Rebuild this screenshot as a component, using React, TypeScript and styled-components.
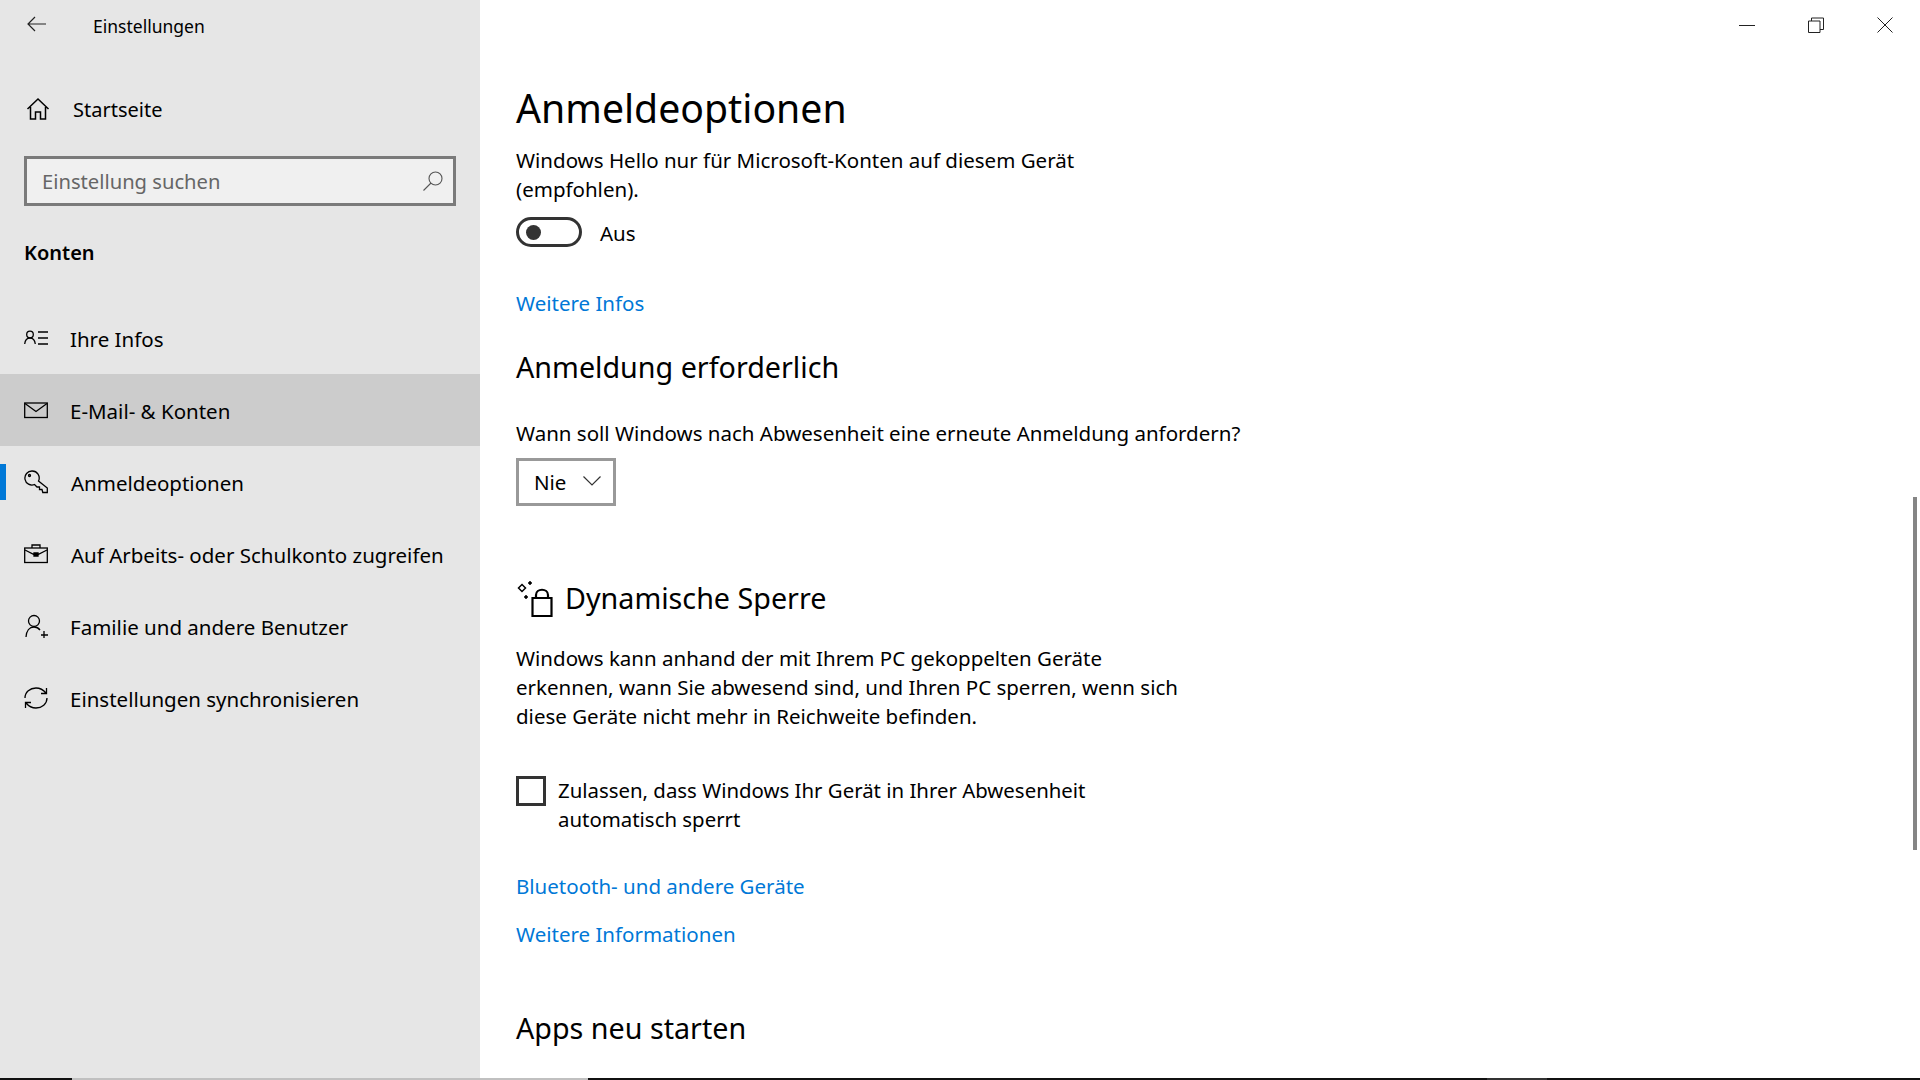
import React from "react";
import styled, { createGlobalStyle } from "styled-components";

const Global = createGlobalStyle`
  html, body { margin: 0; padding: 0; background: #fff; }
  body { font-family: "Noto Sans", "Open Sans", sans-serif; color: #000; }
`;

const Screen = styled.div`
  width: 1920px;
  height: 1080px;
  display: flex;
  flex-direction: column;
  overflow: hidden;
`;
const Main = styled.div`
  flex: 1;
  min-height: 0;
  display: flex;
`;
const TaskStrip = styled.div`
  height: 2px;
  flex: none;
  display: grid;
  grid-template-columns: 72px 516px 899px 60px 1fr;
`;
const StripPart = styled.div<{ $c: string }>`
  background: ${(p) => p.$c};
`;
const Sidebar = styled.nav`
  width: 480px;
  flex: none;
  background: #e6e6e6;
  display: flex;
  flex-direction: column;
`;
const TitleRow = styled.div`
  height: 50px;
  display: flex;
  align-items: center;
  padding-left: 27px;
`;
const BackArrow = styled.svg`
  width: 19px;
  height: 16px;
  margin-bottom: 3px;
  fill: none;
  stroke: #222;
  stroke-width: 1.2;
`;
const AppTitle = styled.span`
  font-size: 17.5px;
  margin: 2px 0 0 47px;
`;
const HomeRow = styled.div`
  height: 60px;
  margin-top: 29px;
  display: flex;
  align-items: center;
  padding-left: 26px;
  font-size: 20px;
`;
const HomeLabel = styled.span`
  margin-left: 23px;
`;
const Search = styled.div`
  margin: 17px 24px 0;
  height: 50px;
  box-sizing: border-box;
  border: 3px solid #7a7a7a;
  background: #f0f0f0;
  display: flex;
  align-items: center;
  justify-content: space-between;
  padding: 0 10px 0 15px;
  font-size: 20.2px;
  color: #666;
`;
const GroupTitle = styled.div`
  margin: 31px 0 0 24px;
  height: 32px;
  line-height: 32px;
  font-size: 20px;
  font-weight: 600;
`;
const NavList = styled.div`
  margin-top: 33px;
  display: flex;
  flex-direction: column;
`;
const NavItem = styled.div<{ $hover?: boolean; $selected?: boolean }>`
  position: relative;
  height: 72px;
  display: flex;
  align-items: center;
  padding-left: 24px;
  font-size: 20.5px;
  background: ${(p) => (p.$hover ? "#ccc" : "transparent")};
  ${(p) =>
    p.$selected
      ? `&::before { content: ""; position: absolute; left: 0; top: 18px; width: 6px; height: 36px; background: #0078d7; }`
      : ""}
`;
const NavIcon = styled.svg`
  width: 24px;
  height: 24px;
  flex: none;
  fill: none;
  stroke: #000;
  stroke-width: 1.3;
`;
const NavLabel = styled.span<{ $shift?: number }>`
  margin: 2px 0 0 ${(p) => 22 + (p.$shift ?? 0)}px;
`;

const Content = styled.main`
  flex: 1;
  position: relative;
  padding: 0 0 0 36px;
  overflow: hidden;
`;
const WindowButtons = styled.div`
  position: absolute;
  right: 1px;
  top: 0;
  display: flex;
`;
const WinBtn = styled.div`
  width: 69px;
  height: 50px;
  display: flex;
  align-items: center;
  justify-content: center;
`;
const Scrollbar = styled.div`
  position: absolute;
  right: 3px;
  top: 497px;
  width: 4px;
  height: 353px;
  background: #858585;
`;
const PageTitle = styled.h1`
  margin: 0;
  padding-top: 80px;
  font-size: 39.2px;
  line-height: 56px;
  font-weight: 400;
`;
const Para = styled.p<{ $top?: number }>`
  margin: ${(p) => p.$top ?? 0}px 0 0;
  font-size: 20.5px;
  line-height: 29px;
`;
const ToggleRow = styled.div`
  margin-top: 13px;
  display: flex;
  align-items: center;
  height: 30px;
  font-size: 20.5px;
`;
const Toggle = styled.div`
  width: 66px;
  height: 30px;
  box-sizing: border-box;
  border: 3px solid #333;
  border-radius: 15px;
  display: flex;
  align-items: center;
  padding-left: 7px;
  margin-right: 18px;
`;
const ToggleLabel = styled.span`
  margin-top: 2px;
`;
const Knob = styled.div`
  width: 15px;
  height: 15px;
  border-radius: 50%;
  background: #333;
`;
const LinkText = styled.div<{ $top: number }>`
  margin-top: ${(p) => p.$top}px;
  font-size: 20.5px;
  line-height: 29px;
  color: #0078d7;
`;
const SectionTitle = styled.h2<{ $top: number }>`
  margin: ${(p) => p.$top}px 0 0;
  font-size: 28.7px;
  line-height: 40px;
  font-weight: 400;
`;
const Select = styled.div`
  margin-top: 10px;
  width: 100px;
  height: 48px;
  box-sizing: border-box;
  border: 3px solid #999;
  display: flex;
  align-items: center;
  padding-left: 15px;
  font-size: 20.5px;
`;
const Chevron = styled.svg`
  margin: 0 0 3px 17px;
  width: 18px;
  height: 10px;
  fill: none;
  stroke: #333;
  stroke-width: 1.2;
`;
const LockHeading = styled.div`
  margin-top: 72px;
  display: flex;
  align-items: center;
  height: 40px;
`;
const LockIcon = styled.svg`
  width: 38px;
  height: 38px;
  flex: none;
  margin-right: 11px;
  fill: none;
  stroke: #000;
`;
const LockTitle = styled.span`
  font-size: 28.7px;
  line-height: 40px;
`;
const CheckRow = styled.div`
  margin-top: 45px;
  display: flex;
  align-items: flex-start;
`;
const CheckBox = styled.div`
  width: 30px;
  height: 30px;
  box-sizing: border-box;
  border: 3px solid #333;
  flex: none;
  margin-right: 12px;
`;
const CheckLabel = styled.div`
  font-size: 20.4px;
  line-height: 29px;
`;

const nav = [
  { label: "Ihre Infos", icon: <><circle cx="6" cy="8.500" r="3.300" /><path d="M.7 18c.4-3.700 2.600-6 5.300-6s4.800 2.300 5.300 6M14 6h10M14 12h10M14 18h10" /></> },
  { label: "E-Mail- & Konten", hover: true, icon: <><rect x=".7" y="5" width="22.600" height="14.500" /><path d="M1 5.500l11 8 11-8" /></> },
  { label: "Anmeldeoptionen", selected: true, shift: 1, icon: <><path d="M8 1a7 7 0 1 0 2.500 13.500l2.500 2.500h2.500v2.500h2.500l.8 3h4.500v-4.500L14.500 11A7 7 0 0 0 8 1z" /><circle cx="5.500" cy="5.500" r="1" /></> },
  { label: "Auf Arbeits- oder Schulkonto zugreifen", shift: 1, icon: <><rect x=".7" y="6" width="22.600" height="14.500" /><path d="M8 6V3h8v3M1 8l9 4.500h4L23 8M10 11h4v3h-4z" /></> },
  { label: "Familie und andere Benutzer", icon: <><circle cx="10" cy="7" r="5.500" /><path d="M2 23c.4-6 3.500-10 8-10 2.500 0 4.500 1 6 3M20 17v7M17 21h7" /></> },
  { label: "Einstellungen synchronisieren", icon: <path d="M1 12C1 6 6 2 12 2c4 0 7.500 2 10 5M23 12c0 6-5 10-11 10-4 0-7.500-2-10-5M22.500 2v5.500H17M1.500 22v-5.500H7" /> },
];

export default function App() {
  return (
    <Screen>
      <Global />
      <Main>
        <Sidebar>
          <TitleRow>
            <BackArrow viewBox="0 0 19 16">
              <path d="M19 8H1M8 1L1 8l7 7" />
            </BackArrow>
            <AppTitle>Einstellungen</AppTitle>
          </TitleRow>
          <HomeRow>
            <svg width="24" height="24" viewBox="0 0 24 24" fill="none" stroke="#000" strokeWidth="1.5">
              <path d="M1.500 12L12 2l10.500 10M4.500 10v12h5v-7h5v7h5V10" />
            </svg>
            <HomeLabel>Startseite</HomeLabel>
          </HomeRow>
          <Search>
            <span>Einstellung suchen</span>
            <svg width="20" height="20" viewBox="0 0 20 20" fill="none" stroke="#555" strokeWidth="1.1">
              <circle cx="12.500" cy="7.500" r="6.500" />
              <path d="M8 12l-7.500 7.500" />
            </svg>
          </Search>
          <GroupTitle>Konten</GroupTitle>
          <NavList>
            {nav.map((n) => (
              <NavItem key={n.label} $hover={n.hover} $selected={n.selected}>
                <NavIcon viewBox="0 0 24 24">{n.icon}</NavIcon>
                <NavLabel $shift={n.shift}>{n.label}</NavLabel>
              </NavItem>
            ))}
          </NavList>
        </Sidebar>
        <Content>
          <WindowButtons>
            <WinBtn>
              <svg width="16" height="16" viewBox="0 0 16 16" stroke="#222" strokeWidth="1"><path d="M0 8.500h16" /></svg>
            </WinBtn>
            <WinBtn>
              <svg width="16" height="16" viewBox="0 0 16 16" fill="none" stroke="#222" strokeWidth="1"><path d="M.5 4h11.500v11.500H.5zM3.500 4V1h12v11.500H12" /></svg>
            </WinBtn>
            <WinBtn>
              <svg width="16" height="16" viewBox="0 0 16 16" stroke="#222" strokeWidth="1"><path d="M.5.500l15 15M15.500.500l-15 15" /></svg>
            </WinBtn>
          </WindowButtons>
          <Scrollbar />
          <PageTitle>Anmeldeoptionen</PageTitle>
          <Para $top={10}>Windows Hello nur für Microsoft-Konten auf diesem Gerät<br />(empfohlen).</Para>
          <ToggleRow>
            <Toggle><Knob /></Toggle>
            <ToggleLabel>Aus</ToggleLabel>
          </ToggleRow>
          <LinkText $top={42}>Weitere Infos</LinkText>
          <SectionTitle $top={29}>Anmeldung erforderlich</SectionTitle>
          <Para $top={32}>Wann soll Windows nach Abwesenheit eine erneute Anmeldung anfordern?</Para>
          <Select>
            <span>Nie</span>
            <Chevron viewBox="0 0 18 10"><path d="M.5.500L9 9 17.500.500" /></Chevron>
          </Select>
          <LockHeading>
            <LockIcon viewBox="0 0 38 38">
              <path d="M16.500 19h19v18h-19zM20 19v-3c0-7 12-7 12 0v3" strokeWidth="2.200" />
              <path d="M6 5.500l3.500 3.500L6 12.500 2.500 9z" strokeWidth="1.500" />
              <path d="M14 2l2 2-2 2-2-2zM10 16l2 2-2 2-2-2z" fill="#000" strokeWidth=".5" />
            </LockIcon>
            <LockTitle>Dynamische Sperre</LockTitle>
          </LockHeading>
          <Para $top={26}>Windows kann anhand der mit Ihrem PC gekoppelten Geräte<br />erkennen, wann Sie abwesend sind, und Ihren PC sperren, wenn sich<br />diese Geräte nicht mehr in Reichweite befinden.</Para>
          <CheckRow>
            <CheckBox />
            <CheckLabel>Zulassen, dass Windows Ihr Gerät in Ihrer Abwesenheit<br />automatisch sperrt</CheckLabel>
          </CheckRow>
          <LinkText $top={38}>Bluetooth- und andere Geräte</LinkText>
          <LinkText $top={19}>Weitere Informationen</LinkText>
          <SectionTitle $top={59}>Apps neu starten</SectionTitle>
        </Content>
      </Main>
      <TaskStrip>
        <StripPart $c="#111" />
        <StripPart $c="#c0c0c0" />
        <StripPart $c="#111" />
        <StripPart $c="#333" />
        <StripPart $c="#111" />
      </TaskStrip>
    </Screen>
  );
}
